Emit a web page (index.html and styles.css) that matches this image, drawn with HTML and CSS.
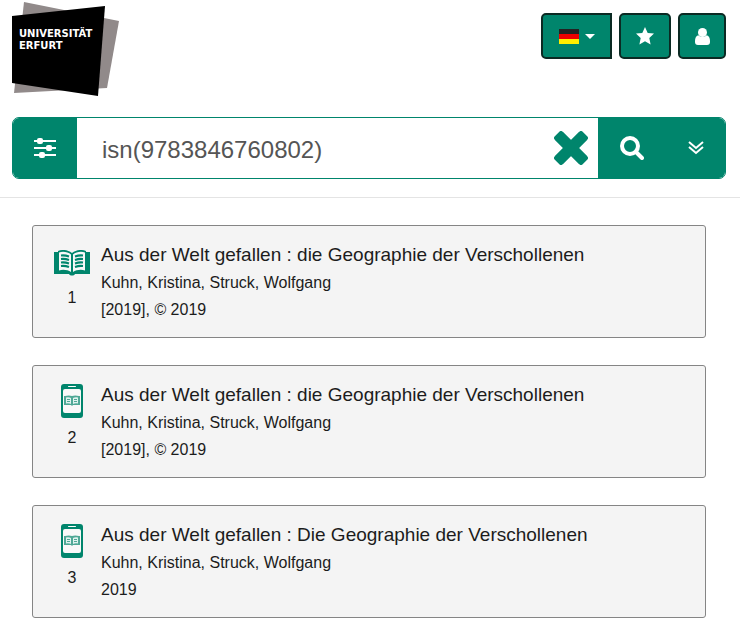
FILE: index.html
```html
<!DOCTYPE html>
<html lang="de">
<head>
	<meta charset="UTF-8">
	<title>Universität Erfurt</title>
	<link rel="stylesheet" href="styles.css">
</head>
<body>
	<!-- shared icons -->
	<svg class="sprite" aria-hidden="true">
		<symbol id="book" viewBox="0 0 36 26">
			<path fill="#00856c" d="M0 2h4V1C9-1 14 0 18 3 22 0 27-1 32 1v1h4v22H21c-1 2-5 2-6 0H0z"/>
			<path fill="#f8f8f8" d="M5 2.500c4-1.500 9-.5 12 2V22c-3-2-8-3-12-1.500zM31 2.500c-4-1.500-9-.5-12 2V22c3-2 8-3 12-1.500z"/>
			<path fill="none" stroke="#00856c" stroke-width="2" d="M7 5.500q4-.5 8 1M7 9q4-.5 8 1M7 12.500q4-.5 8 1M7 16q4-.5 8 1M29 5.500q-4-.5-8 1M29 9q-4-.5-8 1M29 12.500q-4-.5-8 1M29 16q-4-.5-8 1"/>
		</symbol>
		<symbol id="phone" viewBox="0 0 22 34">
			<rect width="22" height="34" rx="3" fill="#00856c"/>
			<rect x="7" y="2" width="8" height="1" rx=".5" fill="#fff"/>
			<rect x="2" y="5" width="18" height="24" rx="2" fill="#f8f8f8"/>
			<path fill="#4fa896" d="M3 12h1q4-1 7 0 3-1 7 0h1v9h-7l-1 1-1-1H3z"/>
			<path fill="#dff2ee" d="M5 13.500q3-.5 5 .5V20q-2-1-5-.5zM17 13.500q-3-.5-5 .5V20q2-1 5-.5z"/>
			<path stroke="#4fa896" d="M6 15.500h3M6 17.500h3M13 15.500h3M13 17.500h3"/>
		</symbol>
	</svg>

	<header>
		<div class="top">
			<a class="logo" href="#" aria-label="Universität Erfurt">
				<svg width="107" height="94" viewBox="0 0 107 94">
					<path fill="#918a8a" d="M12 0L107 19 95 86 2 91z"/>
					<path fill="#000" d="M0 14L93 4 86 94 0 81z"/>
					<text><tspan x="7" y="35">UNIVERSITÄT</tspan><tspan x="7" y="47">ERFURT</tspan></text>
				</svg>
			</a>
			<nav class="tools">
				<button class="btn btn-lang" type="button" aria-label="Sprache">
					<svg width="20" height="18" viewBox="0 0 20 18">
						<path fill="#222" d="M0 2h20v6H0z"/>
						<path fill="#e00" d="M0 7h20v6H0z"/>
						<path fill="#fe0" d="M0 12h20v5H0z"/>
					</svg>
					<svg width="10" height="6" viewBox="0 0 10 6"><path fill="#fff" d="M0 1h10L5 6z"/></svg>
				</button>
				<button class="btn btn-star" type="button" aria-label="Merkliste">
					<svg width="18" height="18" viewBox="0 0 18 18"><path fill="#fff" d="M9 0l2.700 5.900 6.300.7-4.700 4.400 1.300 6.500L9 14.300l-5.600 3.200L4.700 11 0 6.600l6.300-.7z"/></svg>
				</button>
				<button class="btn btn-user" type="button" aria-label="Konto">
					<svg width="15" height="17" viewBox="0 0 15 17"><path fill="#fff" d="M3.200 7.200Q0 8.500 0 13v1q0 3 3 3h9q3 0 3-3v-1q0-4.500-3.200-5.800Q10 9 7.500 9T3.200 7.200z"/><circle cx="7.500" cy="4.500" r="4.500" fill="#fff"/></svg>
				</button>
			</nav>
		</div>

		<form class="search">
			<button class="filter" type="button" aria-label="Filter">
				<svg width="22" height="20" viewBox="0 0 22 20">
					<path stroke="#fff" stroke-width="2" d="M0 3h22M0 10h22M0 17h22"/>
					<rect x="3" y="0" width="6" height="6" rx="2" fill="#fff"/>
					<rect x="12" y="7" width="6" height="6" rx="2" fill="#fff"/>
					<rect x="5" y="14" width="6" height="6" rx="2" fill="#fff"/>
				</svg>
			</button>
			<input type="text" aria-label="Suche" value="isn(9783846760802)">
			<button class="clear" type="reset" aria-label="Löschen">
				<svg width="34" height="34" viewBox="0 0 34 34"><path stroke="#00856c" stroke-width="11" d="M5 5l24 24M29 5L5 29"/><path fill="none" stroke="#00856c" stroke-width="4" stroke-linejoin="round" d="M7 2L17 12 27 2l5 5-10 10 10 10-5 5-10-10L7 32l-5-5 10-10L2 7z"/></svg>
			</button>
			<button class="submit" type="submit" aria-label="Suchen">
				<svg width="24" height="24" viewBox="0 0 24 24"><circle cx="10" cy="10" r="8" fill="none" stroke="#fff" stroke-width="4"/><path stroke="#fff" stroke-width="4" stroke-linecap="round" d="M16 16l6 6"/></svg>
			</button>
			<button class="more" type="button" aria-label="Erweiterte Suche">
				<svg width="16" height="14" viewBox="0 0 16 14"><path fill="none" stroke="#fff" stroke-width="2" d="M1 1l7 6 7-6M1 6l7 6 7-6"/></svg>
			</button>
		</form>
	</header>

	<main>
		<article class="hit">
			<div class="type">
				<svg class="book"><use href="#book"/></svg>
				<span>1</span>
			</div>
			<div class="info">
				<h2>Aus der Welt gefallen : die Geographie der Verschollenen</h2>
				<p>Kuhn, Kristina, Struck, Wolfgang</p>
				<p>[2019], © 2019</p>
			</div>
		</article>
		<article class="hit">
			<div class="type">
				<svg class="phone"><use href="#phone"/></svg>
				<span>2</span>
			</div>
			<div class="info">
				<h2>Aus der Welt gefallen : die Geographie der Verschollenen</h2>
				<p>Kuhn, Kristina, Struck, Wolfgang</p>
				<p>[2019], © 2019</p>
			</div>
		</article>
		<article class="hit">
			<div class="type">
				<svg class="phone"><use href="#phone"/></svg>
				<span>3</span>
			</div>
			<div class="info">
				<h2>Aus der Welt gefallen : Die Geographie der Verschollenen</h2>
				<p>Kuhn, Kristina, Struck, Wolfgang</p>
				<p>2019</p>
			</div>
		</article>
	</main>
</body>
</html>
```

FILE: styles.css
```css
*{
	box-sizing: border-box;
}
body,h2,p{
	margin:0;
}
body{
	background: #fff;
	color:#1c1c1c;
	font:16px/27px "Liberation Sans",Arial,sans-serif;
}
svg{
	display: block;
}
.sprite{
	display: none;
}
button{
	display: flex;
	align-items: center;
	justify-content: center;
	border:0;
	padding:0;
	background: #00856c;
	cursor: pointer;
}
header{
	padding:2px 14px 18px 12px;
	border-bottom: 1px solid #e4e4e4;
}
.top{
	display: flex;
	justify-content: space-between;
	align-items: flex-start;
}
.logo text{
	fill:#fff;
	font:700 10px "DejaVu Sans",sans-serif;
}
.tools{
	display: flex;
	gap:7px;
	padding-top: 11px;
}
.btn{
	height: 46px;
	border:2px solid #0b2a23;
	border-radius: 5px;
}
.btn-lang{
	width:71px;
	gap:6px;
	border-radius: 5px 0 0 5px;
}
.btn-star{
	width:52px;
}
.btn-user{
	width:48px;
}
.search{
	display: flex;
	height: 62px;
	margin-top: 21px;
	border:1px solid #00856c;
	border-radius: 7px;
	overflow: hidden;
}
.search input{
	flex:1;
	min-width: 0;
	border:0;
	padding:3px 25px 0;
	background: #fff;
	color:#555;
	font:24px "Liberation Sans",Arial,sans-serif;
	outline:none;
}
.filter{
	width:64px;
}
.search .clear{
	width:54px;
	background: #fff;
}
.submit{
	width:68px;
}
.more{
	width:59px;
}
main{
	display: flex;
	flex-direction: column;
	gap:27px;
	padding:27px 34px 18px 32px;
}
.hit{
	display: flex;
	padding:16px 16px 14px;
	border:1px solid #858585;
	border-radius: 3px;
	background: #f4f4f4;
}
.type{
	display: flex;
	flex-direction: column;
	align-items: center;
	justify-content: space-between;
	width:46px;
	padding-top: 2px;
}
.book{
	width:36px;
	height: 26px;
	margin-top: 6px;
}
.phone{
	width:22px;
	height: 34px;
}
.type span{
	margin-bottom: 12px;
}
.info{
	padding-left: 6px;
}
.info h2{
	margin-bottom: 2px;
	font-size: 19px;
	font-weight: 400;
	line-height: 25px;
}
```
